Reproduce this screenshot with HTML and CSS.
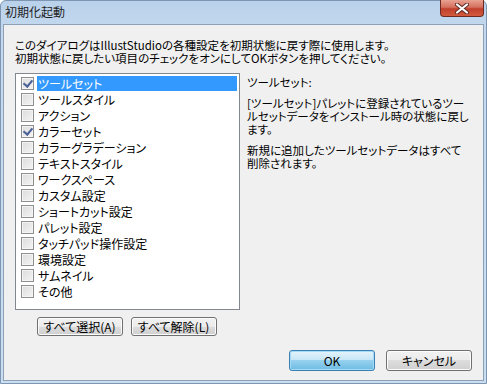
FILE: index.html
```html
<!DOCTYPE html>
<html lang="ja">
<head>
    <meta charset="UTF-8">
    <title>初期化起動</title>
    <link rel="stylesheet" href="styles.css">
</head>
<body>
    <div class="window">
        <div class="titlebar">
            <span class="title">初期化起動</span>
            <button class="close" aria-label="閉じる">
                <svg width="14" height="11" viewBox="0 0 14 11">
                    <path d="M2 1.5 L12 9.5 M12 1.5 L2 9.5" stroke="#5a2a24" stroke-width="4" stroke-linecap="round"/>
                    <path d="M2 1.5 L12 9.5 M12 1.5 L2 9.5" stroke="#fff" stroke-width="2.2" stroke-linecap="round"/>
                </svg>
            </button>
        </div>
        <div class="client">
            <p class="intro">このダイアログはIllustStudioの各種設定を初期状態に戻す際に使用します。<br>初期状態に戻したい項目のチェックをオンにしてOKボタンを押してください。</p>

            <div class="main">
                <div class="left">
                    <ul class="list">
                        <li class="item selected"><span class="check on"></span><span class="label">ツールセット</span></li>
                        <li class="item"><span class="check"></span><span class="label">ツールスタイル</span></li>
                        <li class="item"><span class="check"></span><span class="label">アクション</span></li>
                        <li class="item"><span class="check on"></span><span class="label">カラーセット</span></li>
                        <li class="item"><span class="check"></span><span class="label">カラーグラデーション</span></li>
                        <li class="item"><span class="check"></span><span class="label">テキストスタイル</span></li>
                        <li class="item"><span class="check"></span><span class="label">ワークスペース</span></li>
                        <li class="item"><span class="check"></span><span class="label">カスタム設定</span></li>
                        <li class="item"><span class="check"></span><span class="label">ショートカット設定</span></li>
                        <li class="item"><span class="check"></span><span class="label">パレット設定</span></li>
                        <li class="item"><span class="check"></span><span class="label">タッチパッド操作設定</span></li>
                        <li class="item"><span class="check"></span><span class="label">環境設定</span></li>
                        <li class="item"><span class="check"></span><span class="label">サムネイル</span></li>
                        <li class="item"><span class="check"></span><span class="label">その他</span></li>
                    </ul>
                    <div class="list-buttons">
                        <button class="btn small">すべて選択(A)</button>
                        <button class="btn small">すべて解除(L)</button>
                    </div>
                </div>

                <div class="detail">
                    <p>ツールセット:</p>
                    <p>[ツールセット]パレットに登録されているツー<br>ルセットデータをインストール時の状態に戻し<br>ます。</p>
                    <p>新規に追加したツールセットデータはすべて<br>削除されます。</p>
                </div>
            </div>

            <div class="footer">
                <button class="btn default">OK</button>
                <button class="btn">キャンセル</button>
            </div>
        </div>
    </div>
</body>
</html>
```

FILE: styles.css
```css
* {
    box-sizing: border-box;
}
body {
    margin: 0;
    font-family: "Noto Sans CJK JP", "Liberation Sans", sans-serif;
    font-size: 11.5px;
    font-feature-settings: "palt";
    color: #000;
}
.window {
    width: 487px;
    height: 384px;
    background: linear-gradient(#b9d1ea, #c4d9ef 30px, #cadef2);
    display: flex;
    flex-direction: column;
    border: 1px solid #7f96b2;
    border-radius: 6px 6px 0 0;
}
.titlebar {
    height: 23px;
    display: flex;
    align-items: flex-start;
    justify-content: space-between;
    padding-left: 4px;
}
.title {
    margin-top: 3px;
    line-height: 16px;
    font-size: 12px;
    color: #1e1e1e;
}
.close {
    width: 44px;
    height: 17px;
    margin-right: 2px;
    margin-top: -1px;
    padding: 0;
    border: 1px solid #6d2a22;
    border-top: none;
    border-radius: 0 0 4px 4px;
    background: linear-gradient(#e8a293, #d5705e 45%, #c13f2c 55%, #d25a3e);
    display: flex;
    align-items: center;
    justify-content: center;
}
.client {
    flex: 1;
    margin: 0 2px 2px 2px;
    background: #f0f0f0;
    border: 1px solid #8da0b6;
    padding: 14px 11px 0 11px;
    display: flex;
    flex-direction: column;
}
p {
    margin: 0;
    line-height: 13px;
}
.intro {
    margin-bottom: 8px;
}
.main {
    display: flex;
    gap: 7px;
}
.left {
    width: 225px;
    flex-shrink: 0;
}
.list {
    list-style: none;
    margin: 0;
    padding: 1px 2px 0 5px;
    height: 237px;
    background: #fff;
    border: 1px solid #828790;
}
.item {
    height: 16px;
    display: flex;
    align-items: center;
}
.check {
    width: 13px;
    height: 13px;
    border: 1px solid #8e8f8f;
    background: linear-gradient(135deg, #dcdcdc, #f4f4f4);
    box-shadow: inset 0 0 0 1px #f4f4f4;
    margin-right: 3px;
    position: relative;
}
.check.on::after {
    content: "";
    position: absolute;
    left: 3px;
    top: 0px;
    width: 4px;
    height: 7px;
    border: solid #4a5f97;
    border-width: 0 2px 2px 0;
    transform: rotate(40deg);
}
.label {
    flex: 1;
    height: 15px;
    line-height: 15px;
    padding-left: 1px;
    font-size: 12px;
}
.selected .label {
    background: #3399ff;
    color: #fff;
}
.list-buttons {
    display: flex;
    justify-content: center;
    gap: 8px;
    margin-top: 7px;
    padding-right: 2px;
}
.detail {
    padding-top: 3px;
    white-space: nowrap;
}
.detail p {
    margin-bottom: 8px;
}
.footer {
    display: flex;
    justify-content: flex-end;
    gap: 11px;
    margin-top: 14px;
}
.btn {
    width: 86px;
    height: 21px;
    padding: 0;
    font-family: inherit;
    font-size: 12px;
    font-feature-settings: "palt";
    color: #000;
    border: 1px solid #707070;
    border-radius: 3px;
    background: linear-gradient(#f2f2f2, #ebebeb 50%, #dddddd 50%, #cfcfcf);
    box-shadow: inset 0 0 0 1px #fcfcfc;
}
.btn.small {
    height: 19px;
}
.btn.default {
    border-color: #3c7fb1;
    background: linear-gradient(#e5f4fc, #c4e5f6 50%, #98d1ef 50%, #6cbbe3);
    box-shadow: inset 0 0 0 1px #a4dcf8;
}
```
